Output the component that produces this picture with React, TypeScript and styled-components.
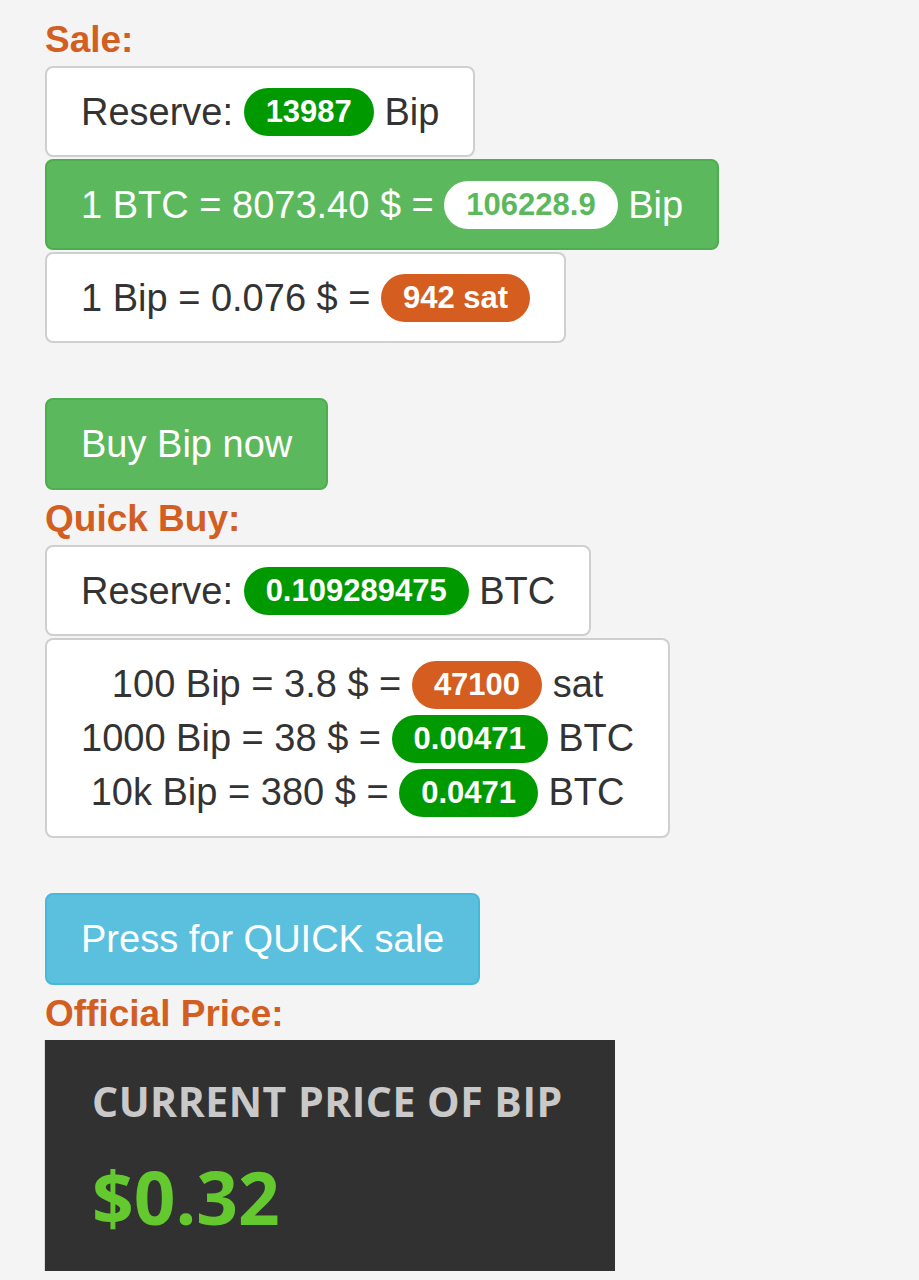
import React from "react";
import styled, { createGlobalStyle, css } from "styled-components";

const Global = createGlobalStyle`
  html, body { margin: 0; padding: 0; background: #f4f4f4; }
  body { font-family: "Liberation Sans", Arial, Helvetica, sans-serif; color: #333; }
`;

const Page = styled.div`
  padding: 11px 0 40px 45px;
  display: flex;
  flex-direction: column;
  align-items: flex-start;
`;

const Heading = styled.h3`
  margin: 9px 0 6px;
  font-size: 37px;
  line-height: 40px;
  font-weight: 700;
  color: #d35e22;
`;

const Group = styled.div`
  display: flex;
  flex-direction: column;
  align-items: flex-start;
  gap: 2px;
  margin-bottom: 55px;
`;

const Box = styled.div<{ $variant?: "plain" | "success"; $multi?: boolean }>`
  box-sizing: border-box;
  border: 2px solid #cfcfcf;
  border-radius: 8px;
  background: #fff;
  padding: ${(p) => (p.$multi ? "17px 34px" : "16.5px 34px")};
  font-size: 38px;
  line-height: 54px;
  color: #333;
  white-space: nowrap;
  text-align: ${(p) => (p.$multi ? "center" : "left")};
  ${(p) =>
    p.$variant === "success" &&
    css`
      background: #5cb85c;
      border-color: #4cae4c;
      color: #fff;
    `}
`;

const Line = styled.div``;

const Badge = styled.span<{ $tone: "green" | "orange" | "white" }>`
  display: inline-block;
  vertical-align: middle;
  margin-top: -4px;
  height: 48px;
  line-height: 48px;
  padding: 0 22px;
  border-radius: 24px;
  font-size: 31px;
  font-weight: 700;
  ${(p) =>
    p.$tone === "green"
      ? css`background: #009a00; color: #fff;`
      : p.$tone === "orange"
      ? css`background: #d45d1f; color: #fff;`
      : css`background: #fff; color: #5cb85c;`}
`;

const Button = styled.button<{ $tone: "success" | "info" }>`
  box-sizing: border-box;
  border: 2px solid;
  border-radius: 8px;
  padding: 17px 34px;
  font-family: "Liberation Sans", Arial, Helvetica, sans-serif;
  font-size: 38px;
  line-height: 54px;
  color: #fff;
  cursor: pointer;
  ${(p) =>
    p.$tone === "success"
      ? css`background: #5cb85c; border-color: #4cae4c;`
      : css`background: #5bc0de; border-color: #46b8da;`}
`;

const PricePanel = styled.div`
  box-sizing: border-box;
  width: 571px;
  margin-left: -1px;
  background: #313131;
  border-left: 1px solid #d8d8d8;
  padding: 41px 0 38px 47px;
  font-family: "Open Sans", "DejaVu Sans", sans-serif;
  font-weight: 700;
`;

const PriceLabel = styled.div`
  font-size: 41px;
  line-height: 41px;
  color: #c9c9c9;
  letter-spacing: 0.5px;
`;

const PriceValue = styled.div`
  margin-top: 38px;
  font-size: 73px;
  line-height: 73px;
  color: #64c92f;
`;

export default function App() {
  return (
    <>
      <Global />
      <Page>
        <Heading>Sale:</Heading>
        <Group>
          <Box>
            Reserve: <Badge $tone="green">13987</Badge> Bip
          </Box>
          <Box $variant="success">
            1 BTC = 8073.40 $ = <Badge $tone="white">106228.9</Badge> Bip
          </Box>
          <Box>
            1 Bip = 0.076 $ = <Badge $tone="orange">942 sat</Badge>
          </Box>
        </Group>
        <Button $tone="success">Buy Bip now</Button>
        <Heading>Quick Buy:</Heading>
        <Group>
          <Box>
            Reserve: <Badge $tone="green">0.109289475</Badge> BTC
          </Box>
          <Box $multi>
            <Line>
              100 Bip = 3.8 $ = <Badge $tone="orange">47100</Badge> sat
            </Line>
            <Line>
              1000 Bip = 38 $ = <Badge $tone="green">0.00471</Badge> BTC
            </Line>
            <Line>
              10k Bip = 380 $ = <Badge $tone="green">0.0471</Badge> BTC
            </Line>
          </Box>
        </Group>
        <Button $tone="info">Press for QUICK sale</Button>
        <Heading>Official Price:</Heading>
        <PricePanel>
          <PriceLabel>CURRENT PRICE OF BIP</PriceLabel>
          <PriceValue>$0.32</PriceValue>
        </PricePanel>
      </Page>
    </>
  );
}
